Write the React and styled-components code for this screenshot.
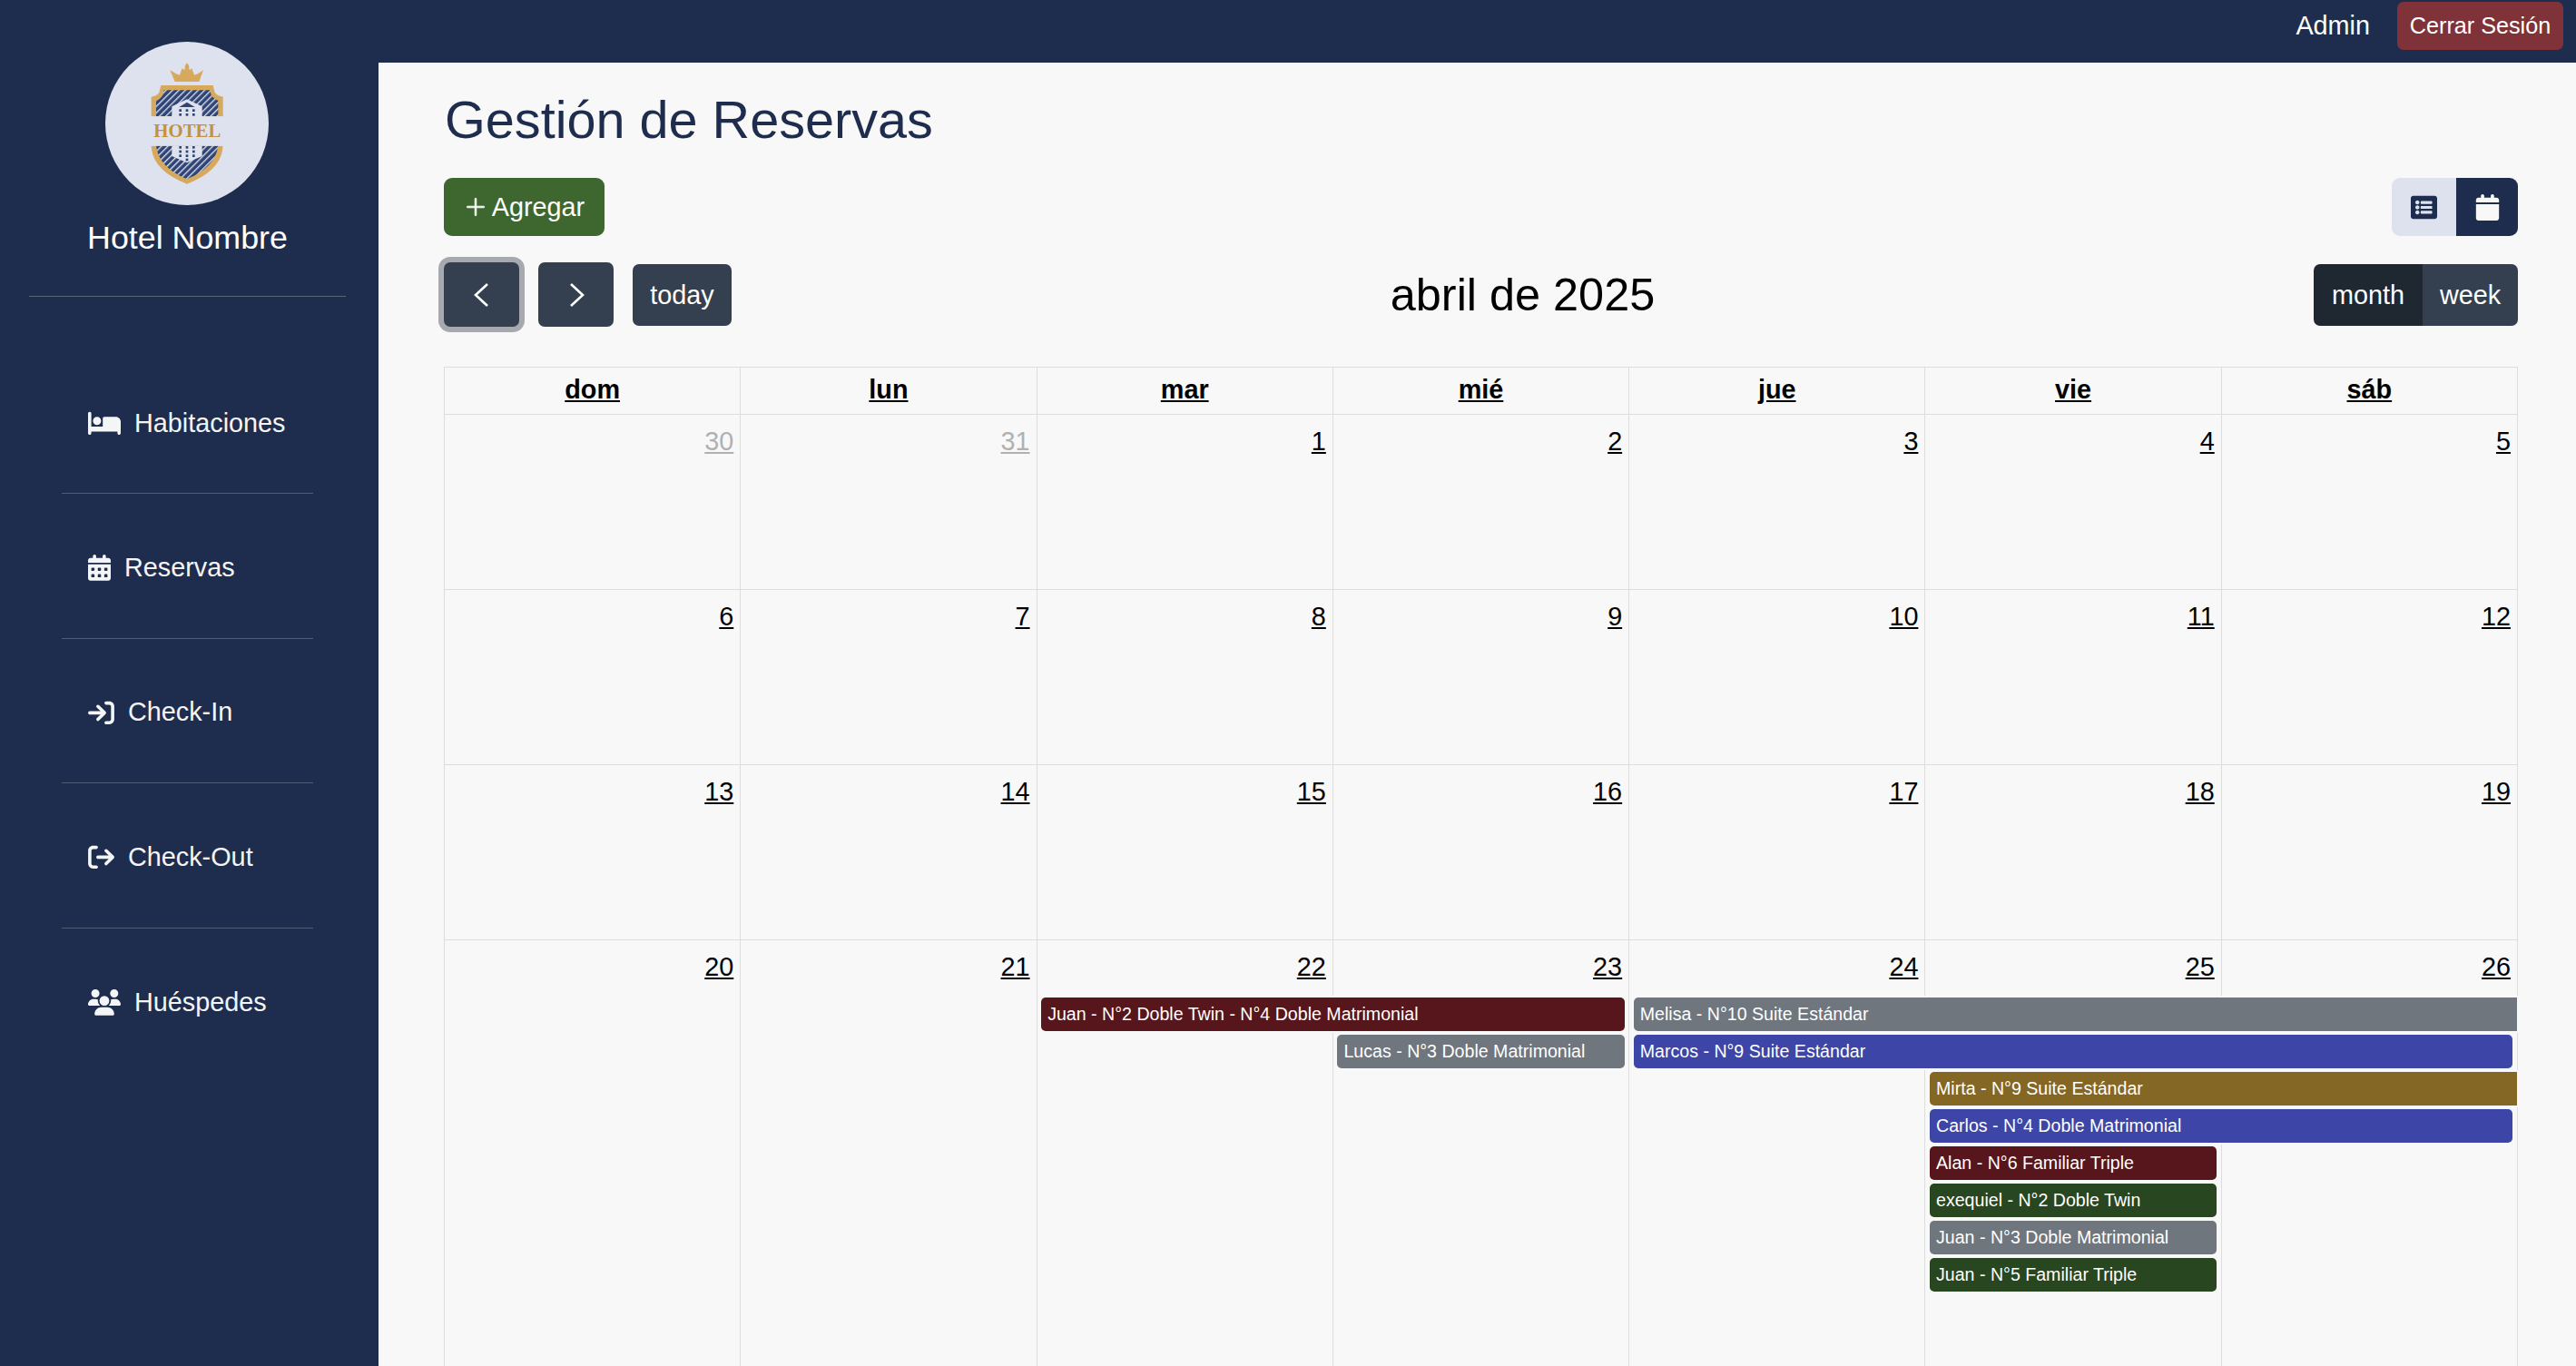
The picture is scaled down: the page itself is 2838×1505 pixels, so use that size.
import React from "react";
import styled, { createGlobalStyle } from "styled-components";
import {
  FaBed,
  FaCalendarDays,
  FaArrowRightToBracket,
  FaArrowRightFromBracket,
  FaUsers,
  FaCalendar,
} from "react-icons/fa6";
import { FaListAlt } from "react-icons/fa";
import { BsPlusLg } from "react-icons/bs";

const NAVY = "#1e2d4d";
const LINE = "#dddddd";

const GlobalStyle = createGlobalStyle`
  html, body {
    margin: 0;
    padding: 0;
    height: 100%;
    overflow: hidden;
    background: #f8f8f8;
    font-family: "Liberation Sans", Arial, sans-serif;
  }
  * { box-sizing: border-box; }
`;

const Layout = styled.div`
  display: grid;
  grid-template-columns: 417px 1fr;
  height: 100vh;
  overflow: hidden;
`;

//sidebar
const Sidebar = styled.aside`
  background: ${NAVY};
  padding: 46px 36px 0 32px;
  display: flex;
  flex-direction: column;
  color: #fff;
`;

const Brand = styled.div`
  display: flex;
  flex-direction: column;
  align-items: center;
  height: 281px;
  border-bottom: 1px solid #59647c;
`;

const LogoCircle = styled.svg`
  width: 180px;
  height: 180px;
  margin-right: 1px;
  display: block;
`;

const BrandName = styled.div`
  margin-top: 15px;
  font-size: 35.8px;
  line-height: 43px;
`;

const NavList = styled.nav`
  margin: 58px 36px 0;
  display: flex;
  flex-direction: column;
`;

const NavItem = styled.a`
  height: 159.4px;
  padding: 4px 0 0 29px;
  display: flex;
  align-items: center;
  gap: 15px;
  font-size: 28.8px;
  color: #f4f5f7;
  border-bottom: ${(p) => (p.$last ? "none" : "1px solid #4f5b75")};

  svg {
    display: block;
    flex: none;
    height: 28.8px;
    width: ${(p) => p.$iconWidth}px;
  }
`;

//right side
const Content = styled.div`
  display: flex;
  flex-direction: column;
  min-width: 0;
`;

const TopBar = styled.header`
  height: 69px;
  flex: none;
  background: ${NAVY};
  display: flex;
  justify-content: flex-end;
  align-items: flex-start;
  padding: 2px 14px 0 0;
  gap: 30px;
`;

const UserName = styled.span`
  color: #fff;
  font-size: 28.8px;
  line-height: 53px;
`;

const LogoutButton = styled.button`
  height: 53px;
  width: 183px;
  padding: 0;
  border: none;
  border-radius: 7px;
  background: #7f3339;
  color: #fff;
  font: inherit;
  font-size: 25.2px;
`;

const Main = styled.main`
  flex: 1;
  padding: 28px 64px 0 72px;
  background: #f8f8f8;
  min-height: 0;
`;

const Title = styled.h1`
  margin: 0 0 29px 1px;
  padding-top: 1px;
  font-size: 57.6px;
  font-weight: 400;
  line-height: 69px;
  color: ${NAVY};
`;

const ActionRow = styled.div`
  display: flex;
  justify-content: space-between;
  align-items: center;
  height: 64px;
`;

const AddButton = styled.button`
  height: 64px;
  width: 177px;
  padding: 0;
  border: none;
  border-radius: 9px;
  background: #3d672e;
  color: #fff;
  font: inherit;
  font-size: 28.8px;
  display: flex;
  align-items: center;
  justify-content: center;
  gap: 5px;

  svg {
    stroke: currentColor;
    stroke-width: 0.5px;
  }
`;

const ViewToggle = styled.div`
  display: flex;
  height: 64px;
  border-radius: 9px;
  overflow: hidden;
`;

const ViewButton = styled.button`
  width: ${(p) => p.$width}px;
  padding: 0;
  border: none;
  background: ${(p) => (p.$active ? NAVY : "#dee2ef")};
  color: ${(p) => (p.$active ? "#f8f8f8" : NAVY)};
  display: flex;
  align-items: center;
  justify-content: center;
`;

const CalendarBar = styled.div`
  display: flex;
  justify-content: space-between;
  align-items: center;
  margin-top: 29px;
  height: 71px;
  margin-bottom: 44px;
`;

const NavGroup = styled.div`
  display: flex;
  align-items: center;
  gap: 21px;
`;

const ArrowButton = styled.button`
  width: 83px;
  height: 71px;
  padding: 0;
  border: none;
  border-radius: 7px;
  background: #343f50;
  color: #fff;
  display: flex;
  align-items: center;
  justify-content: center;
  box-shadow: ${(p) => (p.$focused ? "0 0 0 6px #a6a9b0" : "none")};
`;

const TodayButton = styled.button`
  width: 109px;
  height: 68px;
  padding: 2px 0 0;
  border: none;
  border-radius: 7px;
  background: #343f50;
  color: #fff;
  font: inherit;
  font-size: 28.8px;
`;

const MonthTitle = styled.h2`
  margin: 0;
  font-size: 50.4px;
  font-weight: 400;
  color: #000;
`;

const ModeGroup = styled.div`
  display: flex;
  height: 68px;
  border-radius: 7px;
  overflow: hidden;
`;

const ModeButton = styled.button`
  width: ${(p) => p.$width}px;
  padding: 2px 0 0;
  border: none;
  background: ${(p) => (p.$active ? "#1f2731" : "#343f50")};
  color: #fff;
  font: inherit;
  font-size: 28.8px;
`;

//calendar
const Table = styled.div`
  border-top: 1px solid ${LINE};
  border-left: 1px solid ${LINE};
`;

const HeaderRow = styled.div`
  display: grid;
  grid-template-columns: repeat(7, 1fr);
  height: 52px;
  border-bottom: 1px solid ${LINE};
`;

const HeaderCell = styled.div`
  border-right: 1px solid ${LINE};
  text-align: center;
  font-size: 28.8px;
  font-weight: 700;
  line-height: 49px;
  text-decoration: underline;
  color: #000;
`;

const Week = styled.div`
  display: grid;
  grid-template-columns: repeat(7, 1fr);
  grid-template-rows: 58.5px repeat(8, 36.7px) 1fr;
  row-gap: 4.4px;
  height: ${(p) => p.$height}px;
  border-bottom: 1px solid ${LINE};
`;

const DayCell = styled.div`
  grid-column: ${(p) => p.$col};
  grid-row: 1 / -1;
  border-right: 1px solid ${LINE};
  padding: 13px 7px 0 0;
  text-align: right;
  font-size: 28.8px;
  line-height: 33px;
  text-decoration: underline;
  color: ${(p) => (p.$muted ? "#b1b1b1" : "#000")};
`;

const EventBar = styled.div`
  grid-column: ${(p) => p.$start} / span ${(p) => p.$span};
  grid-row: ${(p) => p.$row};
  margin-left: 4.6px;
  margin-right: ${(p) => (p.$open ? "1px" : "5.6px")};
  padding-left: 7px;
  display: flex;
  align-items: center;
  background: ${(p) => p.$color};
  color: #fff;
  font-size: 19.6px;
  white-space: nowrap;
  border-radius: ${(p) => (p.$open ? "5px 0 0 5px" : "5px")};
  box-shadow: 0 0 0 2px #f8f8f8;
`;

const MAROON = "#57161b";
const GREY = "#6f767e";
const BLUE = "#3d46a6";
const GOLD = "#856725";
const GREEN = "#284620";

const menu = [
  { label: "Habitaciones", icon: FaBed, width: 36 },
  { label: "Reservas", icon: FaCalendarDays, width: 25 },
  { label: "Check-In", icon: FaArrowRightToBracket, width: 29 },
  { label: "Check-Out", icon: FaArrowRightFromBracket, width: 29 },
  { label: "Huéspedes", icon: FaUsers, width: 36 },
];

const dayNames = ["dom", "lun", "mar", "mié", "jue", "vie", "sáb"];

const weeks = [
  [30, 31, 1, 2, 3, 4, 5],
  [6, 7, 8, 9, 10, 11, 12],
  [13, 14, 15, 16, 17, 18, 19],
];

const events = [
  { text: "Juan - N°2 Doble Twin - N°4 Doble Matrimonial", start: 3, span: 2, row: 2, color: MAROON },
  { text: "Melisa - N°10 Suite Estándar", start: 5, span: 3, row: 2, color: GREY, open: true },
  { text: "Lucas - N°3 Doble Matrimonial", start: 4, span: 1, row: 3, color: GREY },
  { text: "Marcos - N°9 Suite Estándar", start: 5, span: 3, row: 3, color: BLUE },
  { text: "Mirta - N°9 Suite Estándar", start: 6, span: 2, row: 4, color: GOLD, open: true },
  { text: "Carlos - N°4 Doble Matrimonial", start: 6, span: 2, row: 5, color: BLUE },
  { text: "Alan - N°6 Familiar Triple", start: 6, span: 1, row: 6, color: MAROON },
  { text: "exequiel - N°2 Doble Twin", start: 6, span: 1, row: 7, color: GREEN },
  { text: "Juan - N°3 Doble Matrimonial", start: 6, span: 1, row: 8, color: GREY },
  { text: "Juan - N°5 Familiar Triple", start: 6, span: 1, row: 9, color: GREEN },
];

// logo, coordinates taken from the reference crop
function Logo() {
  return (
    <LogoCircle viewBox="48 18 540 540">
      <defs>
        <pattern id="stripes" width="15" height="15" patternUnits="userSpaceOnUse" patternTransform="rotate(45)">
          <rect width="15" height="15" fill="#2f4475" />
          <rect width="4" height="15" fill="#dee2ef" />
        </pattern>
      </defs>
      <circle cx="318" cy="288" r="270" fill="#dee2ef" />
      <path
        d="M278 150 L262 112 L282 124 L294 128 L302 106 L310 112 L312 96 L318 88 L324 96 L326 112 L334 106 L342 128 L354 124 L372 112 L358 150 Z"
        fill="#d6a95c"
      />
      <path
        d="M232 162 H404 L410 186 Q420 198 437 200 V265 H200 V200 Q218 198 226 186 Z"
        fill="#d6a95c"
      />
      <path
        d="M242 178 H394 L398 194 Q408 208 421 212 V264 H216 V212 Q230 208 238 194 Z"
        fill="url(#stripes)"
      />
      <path d="M200 362 H436 V372 Q426 446 318 488 Q210 446 201 372 Z" fill="#d6a95c" />
      <path d="M216 362 H421 Q412 432 318 472 Q224 432 216 362 Z" fill="url(#stripes)" />
      <path d="M268 266 V232 L318 208 L368 232 V266 Z" fill="#dee2ef" />
      <path d="M268 362 H368 V396 L318 418 L268 396 Z" fill="#dee2ef" />
      <path d="M292 234 L318 218 L344 234 Z" fill="#2f4475" />
      {[296, 318, 340].flatMap((x) =>
        [245, 259, 367, 381, 395].map((y) => (
          <rect key={x + "-" + y} x={x - 4} y={y - 4} width="8" height="8" fill="#2f4475" />
        ))
      )}
      <rect x="314" y="404" width="8" height="8" fill="#2f4475" />
      <rect x="196" y="265" width="246" height="97" fill="#dee2ef" />
      <text
        x="319"
        y="332"
        textAnchor="middle"
        fontFamily="'Liberation Serif', serif"
        fontWeight="700"
        fontSize="62"
        fill="#c4923f"
        textLength="222"
        lengthAdjust="spacingAndGlyphs"
      >
        HOTEL
      </text>
    </LogoCircle>
  );
}

function Chevron({ left }) {
  return (
    <svg width="18" height="26" viewBox="0 0 18 26" fill="none" stroke="currentColor" strokeWidth="2.6">
      <polyline points={left ? "15,1 2,13 15,25" : "3,1 16,13 3,25"} />
    </svg>
  );
}

export default function App() {
  return (
    <Layout>
      <GlobalStyle />
      <Sidebar>
        <Brand>
          <Logo />
          <BrandName>Hotel Nombre</BrandName>
        </Brand>
        <NavList>
          {menu.map((m, i) => (
            <NavItem key={m.label} $iconWidth={m.width} $last={i === menu.length - 1}>
              <m.icon />
              {m.label}
            </NavItem>
          ))}
        </NavList>
      </Sidebar>

      <Content>
        <TopBar>
          <UserName>Admin</UserName>
          <LogoutButton>Cerrar Sesión</LogoutButton>
        </TopBar>
        <Main>
          <Title>Gestión de Reservas</Title>
          <ActionRow>
            <AddButton>
              <BsPlusLg size={26} />
              Agregar
            </AddButton>
            <ViewToggle>
              <ViewButton $width={71}>
                <FaListAlt size={29} />
              </ViewButton>
              <ViewButton $width={68} $active>
                <FaCalendar size={29} />
              </ViewButton>
            </ViewToggle>
          </ActionRow>
          <CalendarBar>
            <NavGroup>
              <ArrowButton $focused>
                <Chevron left />
              </ArrowButton>
              <ArrowButton>
                <Chevron />
              </ArrowButton>
              <TodayButton>today</TodayButton>
            </NavGroup>
            <MonthTitle>abril de 2025</MonthTitle>
            <ModeGroup>
              <ModeButton $width={120} $active>month</ModeButton>
              <ModeButton $width={105}>week</ModeButton>
            </ModeGroup>
          </CalendarBar>
          <Table>
            <HeaderRow>
              {dayNames.map((d) => (
                <HeaderCell key={d}>{d}</HeaderCell>
              ))}
            </HeaderRow>
            {weeks.map((week) => (
              <Week key={week[0]} $height={193}>
                {week.map((n, i) => (
                  <DayCell key={n} $col={i + 1} $muted={n > 29}>
                    {n}
                  </DayCell>
                ))}
              </Week>
            ))}
            <Week $height={600}>
              {[20, 21, 22, 23, 24, 25, 26].map((n, i) => (
                <DayCell key={n} $col={i + 1}>
                  {n}
                </DayCell>
              ))}
              {events.map((e) => (
                <EventBar
                  key={e.text}
                  $start={e.start}
                  $span={e.span}
                  $row={e.row}
                  $color={e.color}
                  $open={e.open}
                >
                  {e.text}
                </EventBar>
              ))}
            </Week>
          </Table>
        </Main>
      </Content>
    </Layout>
  );
}
